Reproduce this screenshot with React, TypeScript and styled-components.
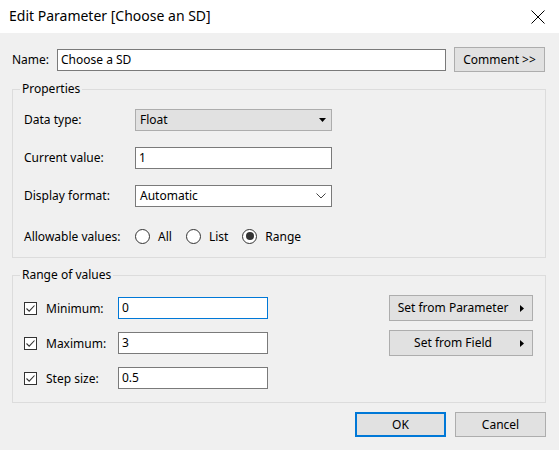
import React from "react";
import styled, { createGlobalStyle } from "styled-components";

const Global = createGlobalStyle`
  html, body { margin: 0; padding: 0; background: #f0f0f0; }
  * { box-sizing: border-box; }
`;

const FONT = `"Noto Sans", "Open Sans", "DejaVu Sans", sans-serif`;

const Window = styled.div`
  width: 559px;
  height: 450px;
  background: #f0f0f0;
  display: flex;
  flex-direction: column;
  font-family: ${FONT};
  font-size: 12px;
  color: #000;
  overflow: hidden;
`;

const TitleBar = styled.div`
  height: 33px;
  flex: none;
  background: #fff;
  display: flex;
  align-items: center;
  justify-content: space-between;
  padding: 0 14px 0 9px;
`;

const Title = styled.span`
  font-size: 14px;
  line-height: 18px;
  margin-top: -2px;
`;

const Body = styled.div`
  padding: 14px 13px 0 12px;
  display: flex;
  flex-direction: column;
`;

const NameRow = styled.div`
  height: 25px;
  display: flex;
  align-items: center;
`;

const NameLabel = styled.span`
  width: 45px;
  flex: none;
`;

const TextInput = styled.div<{ $w: number; $focus?: boolean }>`
  width: ${(p) => p.$w}px;
  height: 22px;
  flex: none;
  background: #fff;
  border: 1px solid ${(p) => (p.$focus ? "#0078d7" : "#7a7a7a")};
  padding: 0 3px;
  display: flex;
  align-items: center;
  line-height: 16px;
`;

const Button = styled.div<{ $w: number; $h?: number; $default?: boolean }>`
  width: ${(p) => p.$w}px;
  height: ${(p) => p.$h ?? 25}px;
  flex: none;
  background: #e1e1e1;
  border: ${(p) => (p.$default ? "2px solid #0078d7" : "1px solid #adadad")};
  display: flex;
  align-items: center;
  justify-content: center;
  line-height: 16px;
`;

const CommentButton = styled(Button)`
  margin-left: 8px;
`;

const Group = styled.fieldset<{ $mt: number; $pb: number }>`
  margin: ${(p) => p.$mt}px 0 0 0;
  border: 1px solid #dcdcdc;
  padding: 12px 12px ${(p) => p.$pb}px 11px;
  min-width: 0;
`;

const Legend = styled.legend`
  padding: 0 2px;
  margin-left: -4px;
  line-height: 16px;
  font-size: 12px;
`;

const PropGrid = styled.div`
  display: grid;
  grid-template-columns: 111px 197px;
  grid-template-rows: 22px 22px 22px 26px;
  row-gap: 16px;
  align-items: center;
`;

const Label = styled.span`
  line-height: 16px;
`;

const Select = styled.div<{ $flat?: boolean }>`
  height: 22px;
  background: ${(p) => (p.$flat ? "#fff" : "#e1e1e1")};
  border: 1px solid ${(p) => (p.$flat ? "#7a7a7a" : "#adadad")};
  display: flex;
  align-items: center;
  justify-content: space-between;
  padding: 0 5px 0 4px;
  line-height: 16px;
`;

const AllowRow = styled.div`
  grid-column: 1 / span 2;
  height: 26px;
  display: flex;
  align-items: center;
`;

const AllowLabel = styled.span`
  width: 111px;
  flex: none;
`;

const RadioOption = styled.label`
  display: flex;
  align-items: center;
  gap: 8px;
  margin-right: 14px;
`;

const RadioCircle = styled.span<{ $on?: boolean }>`
  width: 15px;
  height: 15px;
  border-radius: 50%;
  border: 1px solid #333;
  background: #fff;
  display: flex;
  align-items: center;
  justify-content: center;
  &::after {
    content: "";
    width: 8px;
    height: 8px;
    border-radius: 50%;
    background: ${(p) => (p.$on ? "#333" : "transparent")};
  }
`;

const RangeBody = styled.div`
  display: flex;
  justify-content: space-between;
`;

const RangeRows = styled.div`
  display: flex;
  flex-direction: column;
  gap: 9px;
`;

const RangeRow = styled.div`
  height: 26px;
  display: flex;
  align-items: center;
`;

const CheckBox = styled.span`
  width: 13px;
  height: 13px;
  flex: none;
  border: 1px solid #333;
  background: #fff;
  display: flex;
  align-items: center;
  justify-content: center;
`;

const RangeLabel = styled.span`
  width: 72px;
  margin-left: 9px;
  flex: none;
`;

const SideButtons = styled.div`
  display: flex;
  flex-direction: column;
  gap: 9px;
`;

const MenuButton = styled.div`
  width: 144px;
  height: 26px;
  background: #e1e1e1;
  border: 1px solid #adadad;
  display: flex;
  align-items: center;
  padding-right: 8px;
`;

const MenuLabel = styled.span`
  flex: 1;
  text-align: center;
  line-height: 16px;
  margin-right: 4px;
`;

const Footer = styled.div`
  margin-top: 9px;
  display: flex;
  justify-content: flex-end;
  gap: 9px;
`;

const DownTri = () => (
  <svg width="7" height="4" viewBox="0 0 7 4">
    <polygon points="0,0 7,0 3.5,4" fill="#000" />
  </svg>
);

const Chevron = () => (
  <svg width="10" height="6" viewBox="0 0 10 6">
    <polyline points="0.5,0.5 5,5 9.5,0.5" fill="none" stroke="#444" strokeWidth="1" />
  </svg>
);

const RightTri = () => (
  <svg width="4" height="7" viewBox="0 0 4 7">
    <polygon points="0,0 4,3.5 0,7" fill="#000" />
  </svg>
);

const Check = () => (
  <svg width="11" height="11" viewBox="0 0 11 11">
    <polyline points="1.5,5.5 4.2,8.2 9.5,2.5" fill="none" stroke="#333" strokeWidth="1.1" />
  </svg>
);

const CloseX = () => (
  <svg width="14" height="14" viewBox="0 0 14 14">
    <line x1="0.5" y1="0.5" x2="13.5" y2="13.5" stroke="#000" strokeWidth="1" />
    <line x1="13.5" y1="0.5" x2="0.5" y2="13.5" stroke="#000" strokeWidth="1" />
  </svg>
);

const rangeRows = [
  { label: "Minimum:", value: "0", focus: true },
  { label: "Maximum:", value: "3" },
  { label: "Step size:", value: "0.5" },
];

export default function App() {
  return (
    <>
      <Global />
      <Window>
        <TitleBar>
          <Title>Edit Parameter [Choose an SD]</Title>
          <CloseX />
        </TitleBar>
        <Body>
          <NameRow>
            <NameLabel>Name:</NameLabel>
            <TextInput $w={389}>Choose a SD</TextInput>
            <CommentButton $w={91}>Comment &gt;&gt;</CommentButton>
          </NameRow>

          <Group $mt={9} $pb={8}>
            <Legend>Properties</Legend>
            <PropGrid>
              <Label>Data type:</Label>
              <Select>
                <span>Float</span>
                <DownTri />
              </Select>
              <Label>Current value:</Label>
              <TextInput $w={197}>1</TextInput>
              <Label>Display format:</Label>
              <Select $flat>
                <span>Automatic</span>
                <Chevron />
              </Select>
              <AllowRow>
                <AllowLabel>Allowable values:</AllowLabel>
                <RadioOption>
                  <RadioCircle />
                  All
                </RadioOption>
                <RadioOption>
                  <RadioCircle />
                  List
                </RadioOption>
                <RadioOption>
                  <RadioCircle $on />
                  Range
                </RadioOption>
              </AllowRow>
            </PropGrid>
          </Group>

          <Group $mt={9} $pb={11}>
            <Legend>Range of values</Legend>
            <RangeBody>
              <RangeRows>
                {rangeRows.map((r) => (
                  <RangeRow key={r.label}>
                    <CheckBox>
                      <Check />
                    </CheckBox>
                    <RangeLabel>{r.label}</RangeLabel>
                    <TextInput $w={150} $focus={r.focus}>
                      {r.value}
                    </TextInput>
                  </RangeRow>
                ))}
              </RangeRows>
              <SideButtons>
                <MenuButton>
                  <MenuLabel>Set from Parameter</MenuLabel>
                  <RightTri />
                </MenuButton>
                <MenuButton>
                  <MenuLabel>Set from Field</MenuLabel>
                  <RightTri />
                </MenuButton>
              </SideButtons>
            </RangeBody>
          </Group>

          <Footer>
            <Button $w={91} $default>
              OK
            </Button>
            <Button $w={91}>Cancel</Button>
          </Footer>
        </Body>
      </Window>
    </>
  );
}
